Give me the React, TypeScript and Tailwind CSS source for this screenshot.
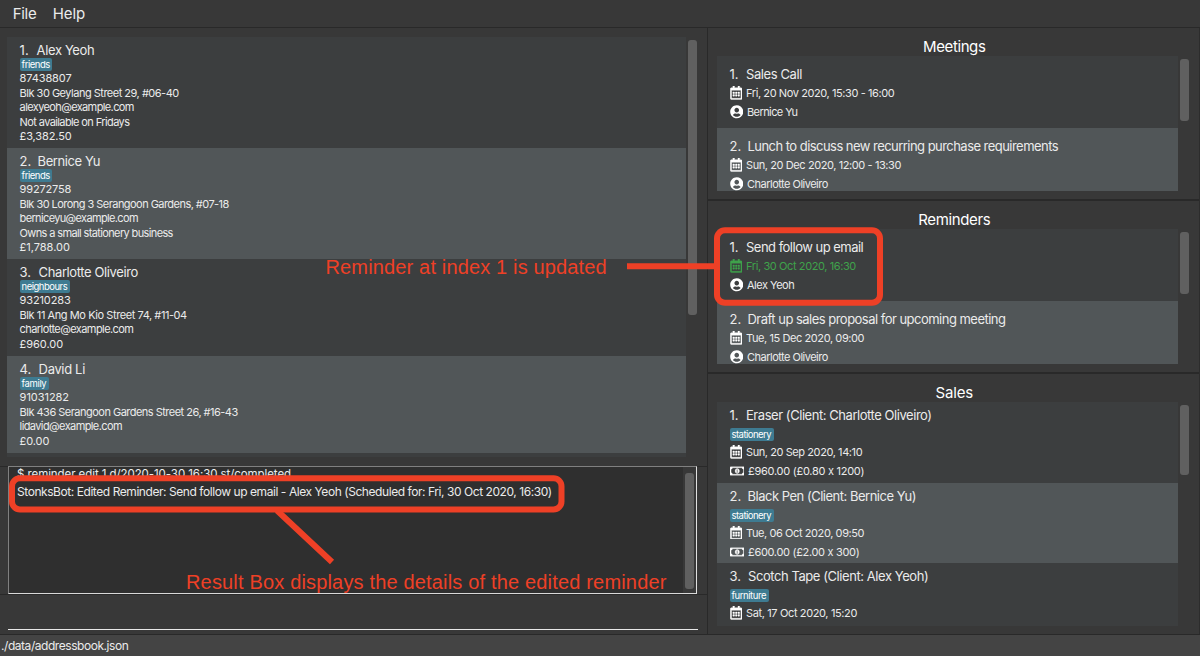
import type { ReactNode } from "react";
import { FaRegCalendarAlt, FaRegMoneyBillAlt, FaUserCircle } from "react-icons/fa";

type Line = { text: string; track: string };
type Contact = { index: string; name: Line; tag: Line; lines: Line[]; box: string; indexWidth: string };
type Entry = {
  index: string;
  indexWidth: string;
  title: Line;
  date: Line;
  person?: Line;
  tag?: Line;
  amount?: Line;
  done?: boolean;
};

const contacts: Contact[] = [
  {
    index: "1.",
    indexWidth: "w-[17px]",
    box: "h-[111px]",
    name: { text: "Alex Yeoh", track: "tracking-[-0.37px]" },
    tag: { text: "friends", track: "tracking-[-0.46px]" },
    lines: [
      { text: "87438807", track: "tracking-[-0.12px]" },
      { text: "Blk 30 Geylang Street 29, #06-40", track: "tracking-[-0.5px]" },
      { text: "alexyeoh@example.com", track: "tracking-[-0.62px]" },
      { text: "Not available on Fridays", track: "tracking-[-0.61px]" },
      { text: "£3,382.50", track: "tracking-[-0.13px]" },
    ],
  },
  {
    index: "2.",
    indexWidth: "w-[18px]",
    box: "h-[111px]",
    name: { text: "Bernice Yu", track: "tracking-[-0.42px]" },
    tag: { text: "friends", track: "tracking-[-0.46px]" },
    lines: [
      { text: "99272758", track: "tracking-[-0.18px]" },
      { text: "Blk 30 Lorong 3 Serangoon Gardens, #07-18", track: "tracking-[-0.545px]" },
      { text: "berniceyu@example.com", track: "tracking-[-0.645px]" },
      { text: "Owns a small stationery business", track: "tracking-[-0.63px]" },
      { text: "£1,788.00", track: "tracking-[-0.01px]" },
    ],
  },
  {
    index: "3.",
    indexWidth: "w-[19px]",
    box: "h-[97px]",
    name: { text: "Charlotte Oliveiro", track: "tracking-[-0.39px]" },
    tag: { text: "neighbours", track: "tracking-[-0.5px]" },
    lines: [
      { text: "93210283", track: "tracking-[-0.13px]" },
      { text: "Blk 11 Ang Mo Kio Street 74, #11-04", track: "tracking-[-0.43px]" },
      { text: "charlotte@example.com", track: "tracking-[-0.575px]" },
      { text: "£960.00", track: "tracking-[-0.05px]" },
    ],
  },
  {
    index: "4.",
    indexWidth: "w-[19px]",
    box: "h-[97px]",
    name: { text: "David Li", track: "tracking-[-0.34px]" },
    tag: { text: "family", track: "tracking-[-0.38px]" },
    lines: [
      { text: "91031282", track: "tracking-[-0.04px]" },
      { text: "Blk 436 Serangoon Gardens Street 26, #16-43", track: "tracking-[-0.515px]" },
      { text: "lidavid@example.com", track: "tracking-[-0.6px]" },
      { text: "£0.00", track: "tracking-[-0.1px]" },
    ],
  },
];

const meetings: Entry[] = [
  {
    index: "1.",
    indexWidth: "w-[16.5px]",
    title: { text: "Sales Call", track: "tracking-[-0.4px]" },
    date: { text: "Fri, 20 Nov 2020, 15:30 - 16:00", track: "tracking-[-0.41px]" },
    person: { text: "Bernice Yu", track: "tracking-[-0.59px]" },
  },
  {
    index: "2.",
    indexWidth: "w-[18px]",
    title: { text: "Lunch to discuss new recurring purchase requirements", track: "tracking-[-0.54px]" },
    date: { text: "Sun, 20 Dec 2020, 12:00 - 13:30", track: "tracking-[-0.41px]" },
    person: { text: "Charlotte Oliveiro", track: "tracking-[-0.51px]" },
  },
];

const reminders: Entry[] = [
  {
    index: "1.",
    indexWidth: "w-[16.5px]",
    title: { text: "Send follow up email", track: "tracking-[-0.51px]" },
    date: { text: "Fri, 30 Oct 2020, 16:30", track: "tracking-[-0.4px]" },
    person: { text: "Alex Yeoh", track: "tracking-[-0.49px]" },
    done: true,
  },
  {
    index: "2.",
    indexWidth: "w-[18px]",
    title: { text: "Draft up sales proposal for upcoming meeting", track: "tracking-[-0.52px]" },
    date: { text: "Tue, 15 Dec 2020, 09:00", track: "tracking-[-0.41px]" },
    person: { text: "Charlotte Oliveiro", track: "tracking-[-0.51px]" },
  },
];

const sales: Entry[] = [
  {
    index: "1.",
    indexWidth: "w-[16.5px]",
    title: { text: "Eraser (Client: Charlotte Oliveiro)", track: "tracking-[-0.45px]" },
    tag: { text: "stationery", track: "tracking-[-0.53px]" },
    date: { text: "Sun, 20 Sep 2020, 14:10", track: "tracking-[-0.42px]" },
    amount: { text: "£960.00 (£0.80 x 1200)", track: "tracking-[-0.27px]" },
  },
  {
    index: "2.",
    indexWidth: "w-[18px]",
    title: { text: "Black Pen (Client: Bernice Yu)", track: "tracking-[-0.49px]" },
    tag: { text: "stationery", track: "tracking-[-0.53px]" },
    date: { text: "Tue, 06 Oct 2020, 09:50", track: "tracking-[-0.41px]" },
    amount: { text: "£600.00 (£2.00 x 300)", track: "tracking-[-0.32px]" },
  },
  {
    index: "3.",
    indexWidth: "w-[18.5px]",
    title: { text: "Scotch Tape (Client: Alex Yeoh)", track: "tracking-[-0.43px]" },
    tag: { text: "furniture", track: "tracking-[-0.43px]" },
    date: { text: "Sat, 17 Oct 2020, 15:20", track: "tracking-[-0.37px]" },
  },
];

function Title({ index, indexWidth, line }: { index: string; indexWidth: string; line: Line }) {
  return (
    <div className="flex h-4 text-[13px] leading-4">
      <span className={`shrink-0 ${indexWidth}`}>{index}</span>
      <span className={line.track}>{line.text}</span>
    </div>
  );
}

function Tag({ line }: { line: Line }) {
  return (
    <div className="flex h-[13px]">
      <span className={`rounded-[2px] bg-[#3e7b91] pr-[2.5px] pl-[2px] text-[9.5px] leading-[13px] text-white ${line.track}`}>
        {line.text}
      </span>
    </div>
  );
}

function ContactCard({ contact, striped }: { contact: Contact; striped: boolean }) {
  return (
    <div className={`shrink-0 pt-[5px] pl-[12.6px] ${contact.box} ${striped ? "bg-[#515658]" : "bg-[#3c3e3f]"}`}>
      <Title index={contact.index} indexWidth={contact.indexWidth} line={contact.name} />
      <Tag line={contact.tag} />
      <div className="mt-[0.4px] text-[11px] leading-[14.5px]">
        {contact.lines.map((l) => (
          <div key={l.text} className={l.track}>
            {l.text}
          </div>
        ))}
      </div>
    </div>
  );
}

function EntryCard({ entry, striped }: { entry: Entry; striped: boolean }) {
  return (
    <div
      className={`shrink-0 pl-[12.5px] ${entry.tag ? "h-[80.6px] pt-[5px]" : "h-[72px] pt-[10px]"} ${
        striped ? "bg-[#515658]" : "bg-[#3c3e3f]"
      }`}
    >
      <Title index={entry.index} indexWidth={entry.indexWidth} line={entry.title} />
      {entry.tag && (
        <div className="mt-[5px]">
          <Tag line={entry.tag} />
        </div>
      )}
      <div className="mt-[2px] text-[11px] leading-[19px]">
        <div className={`flex h-[19px] items-center ${entry.done ? "text-[#3fa24b]" : ""}`}>
          <FaRegCalendarAlt
            strokeWidth={14}
            className={`mb-px h-[13.6px] w-[12.5px] stroke-current ${entry.done ? "" : "text-white"}`}
          />
          <span className={`ml-[4px] ${entry.date.track}`}>{entry.date.text}</span>
        </div>
        {entry.person && (
          <div className="flex h-[19px] items-center">
            <FaUserCircle className="mb-px size-[13.5px] text-white" />
            <span className={`ml-[4px] ${entry.person.track}`}>{entry.person.text}</span>
          </div>
        )}
        {entry.amount && (
          <div className="flex h-[19px] items-center">
            <FaRegMoneyBillAlt strokeWidth={12} className="mb-px h-[12px] w-[14.5px] stroke-current text-white" />
            <span className={`ml-[4px] ${entry.amount.track}`}>{entry.amount.text}</span>
          </div>
        )}
      </div>
    </div>
  );
}

function Panel({
  title,
  track,
  height,
  listHeight,
  thumb,
  children,
}: {
  title: string;
  track: string;
  height: string;
  listHeight: string;
  thumb: string;
  children: ReactNode;
}) {
  return (
    <section className={`flex shrink-0 flex-col pl-[9px] ${height}`}>
      <h2 className={`h-7 w-[474.5px] pt-[9px] text-center text-[15px] leading-5 text-white ${track}`}>{title}</h2>
      <div className="flex">
        <div className={`flex w-[461px] flex-col overflow-hidden bg-[#3c3e3f] ${listHeight}`}>{children}</div>
        <div className={`mt-[3px] ml-[2px] w-[9px] rounded-[3px] bg-[#606060] ${thumb}`} />
      </div>
    </section>
  );
}

export default function App() {
  return (
    <div className="relative flex h-[656px] w-[1200px] flex-col overflow-hidden bg-[#383838] font-['Inter','Liberation_Sans',sans-serif] whitespace-nowrap text-[#ebebeb]">
      <nav className="flex h-7 shrink-0 border-b border-[#292929] pt-[4px] pl-[12.7px] text-[15px] leading-5">
        <span className="w-[40px] tracking-[-0.3px]">File</span>
        <span className="tracking-[-0.1px]">Help</span>
      </nav>

      <main className="flex h-[606px] shrink-0">
        <div className="flex w-[708px] flex-col border-r border-[#292929]">
          <div className="flex h-[439px] shrink-0 border-b border-[#292929] pt-[9px] pl-[7px]">
            <div className="flex h-[420px] w-[678.5px] flex-col overflow-hidden bg-[#3c3e3f]">
              {contacts.map((c, i) => (
                <ContactCard key={c.index} contact={c} striped={i % 2 === 1} />
              ))}
            </div>
            <div className="mt-[3px] ml-[2.5px] h-[275px] w-[9px] rounded-[3px] bg-[#606060]" />
          </div>

          <div className="h-[128px] shrink-0 border-b border-[#292929] pl-[8px]">
            <div className="-mt-px flex h-[128px] w-[689px] justify-between border border-t-[#808080] border-r-[#e0e0e0] border-b-[#d8d8d8] border-l-[#808080] bg-[#2f2f2f]">
              <div className="overflow-hidden pl-[8px]">
                <div className="-mt-[2px] h-[18px] text-[11.5px] leading-[18px] tracking-[-0.075px]">
                  $ reminder edit 1 d/2020-10-30 16:30 st/completed
                </div>
                <div className="h-[19px] text-[12px] leading-[18px] tracking-[-0.437px]">
                  StonksBot: Edited Reminder: Send follow up email - Alex Yeoh (Scheduled for: Fri, 30 Oct 2020, 16:30)
                </div>
              </div>
              <div className="w-[13px] bg-[#383838] pt-[6px] pl-[2px]">
                <div className="h-[116px] w-[9px] rounded-[3px] bg-[#606060]" />
              </div>
            </div>
          </div>

          <div className="ml-[8px] h-[35px] w-[690px] border-b border-[#e8e8e8]" />
        </div>

        <div className="flex w-[492px] flex-col border-r border-[#2c2c2c]">
          <Panel title="Meetings" track="tracking-[-0.4px]" height="h-[173px] border-b-2 border-[#292929]" listHeight="h-[135px]" thumb="h-[62px]">
            {meetings.map((e, i) => (
              <EntryCard key={e.index} entry={e} striped={i % 2 === 1} />
            ))}
          </Panel>
          <Panel title="Reminders" track="tracking-[-0.37px]" height="h-[173px] border-b-2 border-[#292929]" listHeight="h-[135px]" thumb="h-[62px]">
            {reminders.map((e, i) => (
              <EntryCard key={e.index} entry={e} striped={i % 2 === 1} />
            ))}
          </Panel>
          <Panel title="Sales" track="tracking-[-0.2px]" height="h-[260px]" listHeight="h-[224px]" thumb="h-[70px]">
            {sales.map((e, i) => (
              <EntryCard key={e.index} entry={e} striped={i % 2 === 1} />
            ))}
          </Panel>
        </div>
      </main>

      <footer className="h-[22px] shrink-0 border-t border-[#292929] bg-[#444444] pl-[1px] text-[12px] leading-[22px] tracking-[-0.45px]">
        ./data/addressbook.json
      </footer>

      <svg className="pointer-events-none absolute inset-0" width="1200" height="656" fill="none" stroke="#ee4026" strokeWidth="6">
        <rect x="12" y="478.2" width="549.5" height="31.3" rx="8" />
        <rect x="717" y="230.2" width="163" height="72.5" rx="8" />
        <path d="M627 266.3H717M277 510.5L332 562" />
      </svg>
      <div className="absolute top-[256px] left-[325.5px] font-['Liberation_Sans',sans-serif] text-[20px] leading-[23px] tracking-[0.15px] text-[#ee4026]">
        Reminder at index 1 is updated
      </div>
      <div className="absolute top-[571px] left-[186px] font-['Liberation_Sans',sans-serif] text-[20px] leading-[23px] tracking-[0.17px] text-[#ee4026]">
        Result Box displays the details of the edited reminder
      </div>
    </div>
  );
}
